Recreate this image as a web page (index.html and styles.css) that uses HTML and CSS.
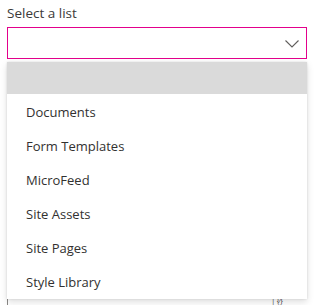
FILE: index.html
```html
<!DOCTYPE html>
<html lang="en">
<head>
<meta charset="utf-8">
<title>Select a list</title>
<link rel="stylesheet" href="styles.css">
</head>
<body>
<div class="form">
  <div class="field">
    <label class="field-label">Select a list</label>
    <div class="dd">
      <div class="dd-box">
        <svg class="dd-chevron" width="14" height="8" viewBox="0 0 14 8"><path d="M0.5 0.5 L7 7 L13.5 0.5" fill="none" stroke="#605e5c" stroke-width="1.1"/></svg>
      </div>
      <div class="dd-menu">
        <div class="dd-item dd-item-blank"></div>
        <div class="dd-item">Documents</div>
        <div class="dd-item">Form Templates</div>
        <div class="dd-item">MicroFeed</div>
        <div class="dd-item">Site Assets</div>
        <div class="dd-item">Site Pages</div>
        <div class="dd-item">Style Library</div>
      </div>
    </div>
  </div>
  <div class="field-next">
    <span class="next-icon">| {&#8260;}</span>
  </div>
</div>
</body>
</html>
```

FILE: styles.css
```css
*{box-sizing:border-box;}
html,body{margin:0;padding:0;}
body{
  font-family:'Open Sans','Noto Sans',sans-serif;
  font-size:13px;
  color:#323130;
  background:#fff;
}
.form{ padding:0 7px; width:314px; }

.field-label{ display:block; padding-top:3px; line-height:20px; margin-bottom:4px; font-size:13.5px; color:#3b3a39; }
.dd{ position:relative; width:300px; }
.dd-box{ height:32px; border:1px solid #e3008c; display:flex; align-items:center; justify-content:flex-end; padding-right:7px; }
.dd-chevron{ display:block; margin-top:1px; }

.dd-menu{ position:absolute; top:35px; left:0; width:300px; background:#fff; box-shadow:0 3px 7px rgba(0,0,0,.13), 0 0 2px rgba(0,0,0,.12); z-index:2; }
.dd-item{ height:34px; line-height:34px; padding-left:19px; color:#323130; }
.dd-item-blank{ height:32px; background:#dadada; margin-bottom:1px; }

.field-next{ margin-top:237px; height:9px; border-left:1px solid #8a8886; display:flex; justify-content:flex-end; padding-right:24px; }
.next-icon{ font-size:7px; line-height:8px; padding-top:1px; color:#323130; }
```
